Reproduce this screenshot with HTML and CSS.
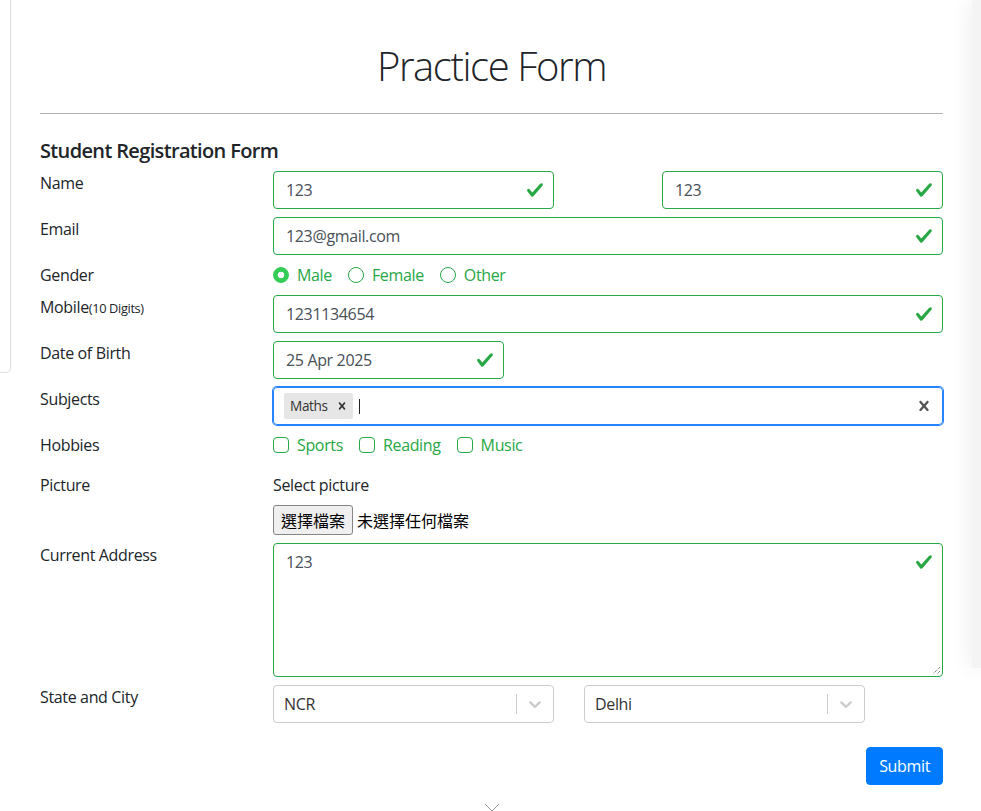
FILE: index.html
```html
<!DOCTYPE html>
<html lang="en">
<head>
<meta charset="utf-8">
<title>Practice Form</title>
<link rel="stylesheet" href="styles.css">
</head>
<body>
<div class="page">
  <aside class="sidebar"><div class="side-card"></div></aside>
  <main class="main">
    <h1 class="title">Practice Form</h1>
    <hr class="rule">
    <h5 class="subtitle">Student Registration Form</h5>
    <form class="form">
      <div class="row">
        <label class="label">Name</label>
        <div class="pair">
          <div class="input half"><span>123</span><svg class="check" viewBox="0 0 8 8"><path d="M2.3 6.73L.6 4.53c-.4-1.04.46-1.4 1.1-.8l1.1 1.4 3.4-3.8c.6-.63 1.6-.27 1.2.7l-4 4.6c-.43.5-.8.4-1.1.1z"/></svg></div>
          <div class="input half"><span>123</span><svg class="check" viewBox="0 0 8 8"><path d="M2.3 6.73L.6 4.53c-.4-1.04.46-1.4 1.1-.8l1.1 1.4 3.4-3.8c.6-.63 1.6-.27 1.2.7l-4 4.6c-.43.5-.8.4-1.1.1z"/></svg></div>
        </div>
      </div>
      <div class="row">
        <label class="label">Email</label>
        <div class="input"><span>123@gmail.com</span><svg class="check" viewBox="0 0 8 8"><path d="M2.3 6.73L.6 4.53c-.4-1.04.46-1.4 1.1-.8l1.1 1.4 3.4-3.8c.6-.63 1.6-.27 1.2.7l-4 4.6c-.43.5-.8.4-1.1.1z"/></svg></div>
      </div>
      <div class="row">
        <label class="label">Gender</label>
        <div class="choices">
          <span class="choice"><span class="radio checked"></span>Male</span>
          <span class="choice"><span class="radio"></span>Female</span>
          <span class="choice"><span class="radio"></span>Other</span>
        </div>
      </div>
      <div class="row">
        <label class="label">Mobile<small class="small">(10 Digits)</small></label>
        <div class="input"><span>1231134654</span><svg class="check" viewBox="0 0 8 8"><path d="M2.3 6.73L.6 4.53c-.4-1.04.46-1.4 1.1-.8l1.1 1.4 3.4-3.8c.6-.63 1.6-.27 1.2.7l-4 4.6c-.43.5-.8.4-1.1.1z"/></svg></div>
      </div>
      <div class="row">
        <label class="label">Date of Birth</label>
        <div class="input dob"><span>25 Apr 2025</span><svg class="check" viewBox="0 0 8 8"><path d="M2.3 6.73L.6 4.53c-.4-1.04.46-1.4 1.1-.8l1.1 1.4 3.4-3.8c.6-.63 1.6-.27 1.2.7l-4 4.6c-.43.5-.8.4-1.1.1z"/></svg></div>
      </div>
      <div class="row">
        <label class="label">Subjects</label>
        <div class="multi">
          <div class="chip">
            <span class="chip-label">Maths</span>
            <span class="chip-remove"><svg viewBox="0 0 20 20"><path d="M14.348 14.849c-0.469 0.469-1.229 0.469-1.697 0l-2.651-3.030-2.651 3.029c-0.469 0.469-1.229 0.469-1.697 0-0.469-0.469-0.469-1.229 0-1.697l2.758-3.15-2.759-3.152c-0.469-0.469-0.469-1.228 0-1.697s1.228-0.469 1.697 0l2.652 3.031 2.651-3.031c0.469-0.469 1.228-0.469 1.697 0s0.469 1.229 0 1.697l-2.758 3.152 2.758 3.150c0.469 0.469 0.469 1.229 0 1.698z"/></svg></span>
          </div>
          <span class="caret"></span>
          <span class="grow"></span>
          <span class="clear"><svg viewBox="0 0 20 20"><path d="M14.348 14.849c-0.469 0.469-1.229 0.469-1.697 0l-2.651-3.030-2.651 3.029c-0.469 0.469-1.229 0.469-1.697 0-0.469-0.469-0.469-1.229 0-1.697l2.758-3.15-2.759-3.152c-0.469-0.469-0.469-1.228 0-1.697s1.228-0.469 1.697 0l2.652 3.031 2.651-3.031c0.469-0.469 1.228-0.469 1.697 0s0.469 1.229 0 1.697l-2.758 3.152 2.758 3.150c0.469 0.469 0.469 1.229 0 1.698z"/></svg></span>
        </div>
      </div>
      <div class="row">
        <label class="label">Hobbies</label>
        <div class="choices">
          <span class="choice"><span class="box"></span>Sports</span>
          <span class="choice"><span class="box"></span>Reading</span>
          <span class="choice"><span class="box"></span>Music</span>
        </div>
      </div>
      <div class="row row-picture">
        <label class="label">Picture</label>
        <div class="file">
          <div class="file-label">Select picture</div>
          <div class="file-line"><span class="file-btn">選擇檔案</span><span class="file-name">未選擇任何檔案</span></div>
        </div>
      </div>
      <div class="row">
        <label class="label">Current Address</label>
        <div class="input area"><span>123</span><svg class="check" viewBox="0 0 8 8"><path d="M2.3 6.73L.6 4.53c-.4-1.04.46-1.4 1.1-.8l1.1 1.4 3.4-3.8c.6-.63 1.6-.27 1.2.7l-4 4.6c-.43.5-.8.4-1.1.1z"/></svg><svg class="grip" viewBox="0 0 10 10"><path d="M9 2L2 9M9 6L6 9"/></svg></div>
      </div>
      <div class="row">
        <label class="label">State and City</label>
        <div class="selects">
          <div class="select"><span class="select-value">NCR</span><span class="sep"></span><span class="dd"><svg viewBox="0 0 20 20"><path d="M4.516 7.548c0.436-0.446 1.043-0.481 1.576 0l3.908 3.747 3.908-3.747c0.533-0.481 1.141-0.446 1.574 0 0.436 0.445 0.408 1.197 0 1.615-0.406 0.418-4.695 4.502-4.695 4.502-0.217 0.223-0.502 0.335-0.787 0.335s-0.57-0.112-0.789-0.335c0 0-4.287-4.084-4.695-4.502s-0.436-1.17 0-1.615z"/></svg></span></div>
          <div class="select"><span class="select-value">Delhi</span><span class="sep"></span><span class="dd"><svg viewBox="0 0 20 20"><path d="M4.516 7.548c0.436-0.446 1.043-0.481 1.576 0l3.908 3.747 3.908-3.747c0.533-0.481 1.141-0.446 1.574 0 0.436 0.445 0.408 1.197 0 1.615-0.406 0.418-4.695 4.502-4.695 4.502-0.217 0.223-0.502 0.335-0.787 0.335s-0.57-0.112-0.789-0.335c0 0-4.287-4.084-4.695-4.502s-0.436-1.17 0-1.615z"/></svg></span></div>
        </div>
      </div>
      <div class="submit-row"><button type="button" class="btn">Submit</button></div>
    </form>
    <div class="more"><svg viewBox="0 0 16 9"><path d="M1 1l7 7 7-7"/></svg></div>
  </main>
  <aside class="ad"></aside>
</div>
</body>
</html>
```
FILE: styles.css
```css
body {
  margin: 0;
  font-family: "Open Sans", "Noto Sans", sans-serif;
  font-size: 16px;
  line-height: 24px;
  letter-spacing: -0.35px;
  color: #212529;
  background: #fff;
}
.page {
  display: flex;
  align-items: flex-start;
  height: 811px;
  overflow: hidden;
}
.sidebar {
  width: 11px;
  flex: none;
}
.side-card {
  height: 372px;
  border-right: 1px solid #dedede;
  border-bottom: 1px solid #dedede;
  border-bottom-right-radius: 5px;
}
.main {
  flex: 1;
  padding: 0 29px;
  min-width: 0;
}
.ad {
  width: 9px;
  flex: none;
  height: 668px;
  background: #f4f4f4;
  box-shadow: 0 0 20px rgba(0, 0, 0, 0.12);
}
.title {
  margin: 42px 0 0;
  font-size: 40px;
  font-weight: 300;
  line-height: 48px;
  letter-spacing: -1.4px;
  text-align: center;
}
.rule {
  margin: 23px 0 0;
  border: 0;
  border-top: 1px solid #b3b3b3;
  height: 0;
}
.subtitle {
  margin: 25px 0 0;
  font-size: 20px;
  font-weight: 600;
  line-height: 24px;
  letter-spacing: -0.65px;
}
.form {
  margin: 0;
}
.row {
  display: grid;
  grid-template-columns: 233px 1fr;
  margin-top: 8px;
}
.label {
  line-height: 24px;
}
.small {
  font-size: 12.8px;
}
.input {
  position: relative;
  box-sizing: border-box;
  height: 38px;
  border: 1px solid #28a745;
  border-radius: 4px;
  padding: 6px 36px 6px 12px;
  color: #495057;
  line-height: 24px;
}
.check {
  position: absolute;
  right: 9px;
  top: 9px;
  width: 18px;
  height: 18px;
  fill: #28a745;
}
.pair {
  display: flex;
  justify-content: space-between;
}
.half {
  width: 281px;
}
.dob {
  width: 231px;
}
.area {
  height: 134px;
}
.grip {
  position: absolute;
  right: 1px;
  bottom: 1px;
  width: 10px;
  height: 10px;
  stroke: #555;
  stroke-width: 1;
  stroke-dasharray: 1 1;
  fill: none;
}
.choices {
  display: flex;
  gap: 16px;
  height: 24px;
}
.choice {
  display: flex;
  align-items: center;
  color: #28a745;
}
.radio,
.box {
  box-sizing: border-box;
  width: 16px;
  height: 16px;
  margin-right: 8px;
  border: 1px solid #28a745;
  background: #fff;
}
.radio {
  border-radius: 50%;
}
.radio.checked {
  border-color: #34ce57;
  background: radial-gradient(circle, #fff 0 3px, #34ce57 3.6px);
}
.box {
  border-radius: 4px;
}
.multi {
  box-sizing: border-box;
  height: 38px;
  border: 1px solid #2684ff;
  box-shadow: 0 0 0 1px #2684ff;
  border-radius: 4px;
  display: flex;
  align-items: center;
  padding: 0 0 0 8px;
}
.chip {
  display: flex;
  align-items: center;
  height: 26px;
  margin: 0 2px;
  background: #e6e6e6;
  border-radius: 2px;
}
.chip-label {
  padding: 0 3px 0 6px;
  font-size: 13.6px;
  color: #333;
}
.chip-remove {
  display: flex;
  padding: 0 4px;
}
.chip-remove svg {
  width: 14px;
  height: 14px;
  fill: #333;
}
.caret {
  width: 1px;
  height: 15px;
  background: #222;
  margin-left: 4px;
}
.grow {
  flex: 1;
}
.clear {
  display: flex;
  padding: 8px;
}
.clear svg {
  width: 20px;
  height: 20px;
  fill: #555;
}
.row-picture {
  margin-top: 16px;
}
.file-label {
  margin-bottom: 8px;
}
.file-line {
  display: flex;
  align-items: center;
  height: 30px;
  font-family: "Noto Sans CJK TC", sans-serif;
  letter-spacing: 0;
}
.file-btn {
  box-sizing: border-box;
  height: 30px;
  padding: 0 7px;
  border: 1px solid #858585;
  border-radius: 3px;
  background: #efefef;
  color: #000;
  display: flex;
  align-items: center;
}
.file-name {
  margin-left: 4px;
  color: #000;
}
.selects {
  display: flex;
  gap: 30px;
}
.select {
  box-sizing: border-box;
  width: 281px;
  height: 38px;
  border: 1px solid #ccc;
  border-radius: 4px;
  display: flex;
  align-items: center;
}
.select-value {
  flex: 1;
  padding-left: 10px;
  color: #333;
}
.sep {
  width: 1px;
  height: 20px;
  background: #ccc;
}
.dd {
  display: flex;
  padding: 8px;
}
.dd svg {
  width: 20px;
  height: 20px;
  fill: #ccc;
}
.submit-row {
  display: flex;
  justify-content: flex-end;
  margin-top: 24px;
}
.btn {
  box-sizing: border-box;
  height: 38px;
  padding: 6px 12px;
  border: 1px solid #007bff;
  border-radius: 4px;
  background: #007bff;
  color: #fff;
  font: inherit;
  letter-spacing: inherit;
  line-height: 24px;
}
.more {
  display: flex;
  justify-content: center;
  margin-top: 18px;
}
.more svg {
  width: 16px;
  height: 9px;
  stroke: #999;
  fill: none;
}
```
